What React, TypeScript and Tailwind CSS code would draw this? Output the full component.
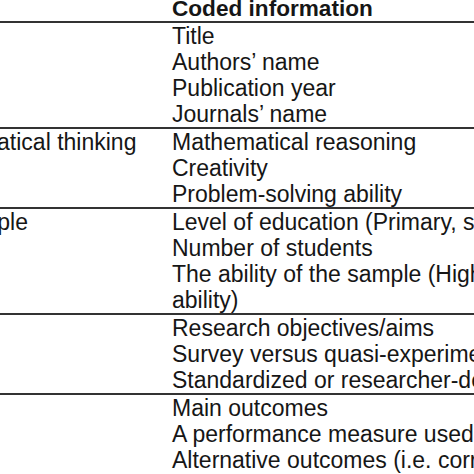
import React from "react";

type Section = { label?: string; offset?: string; lines: string[] };

const sections: Section[] = [
  { lines: ["Title", "Authors’ name", "Publication year", "Journals’ name"] },
  {
    label: "Mathematical thinking",
    offset: "ml-[-86px]",
    lines: ["Mathematical reasoning", "Creativity", "Problem-solving ability"],
  },
  {
    label: "Sample",
    offset: "ml-[-50px]",
    lines: [
      "Level of education (Primary, secondary, tertiary)",
      "Number of students",
      "The ability of the sample (High and low",
      "ability)",
    ],
  },
  {
    lines: [
      "Research objectives/aims",
      "Survey versus quasi-experimental design",
      "Standardized or researcher-designed test",
    ],
  },
  {
    lines: [
      "Main outcomes",
      "A performance measure used",
      "Alternative outcomes (i.e. correlation)",
    ],
  },
];

export default function App() {
  return (
    <div className="w-[474px] h-[474px] overflow-hidden bg-white text-[#161616] font-['Liberation_Sans',Arial,sans-serif] text-[23px] leading-[26px]">
      <div className="grid grid-cols-[172px_1fr] h-[21px]">
        <div />
        <div className="font-bold text-[22.6px] leading-[18px] whitespace-nowrap">Coded information</div>
      </div>
      {sections.map((s, i) => (
        <div key={i}>
          <div className="h-[2px] bg-[#333333]" />
          <div className="grid grid-cols-[172px_1fr]">
            <div className="whitespace-nowrap">
              {s.label ? <div className={s.offset}>{s.label}</div> : null}
            </div>
            <div className="flex flex-col whitespace-nowrap">
              {s.lines.map((l) => (
                <div key={l}>{l}</div>
              ))}
            </div>
          </div>
        </div>
      ))}
    </div>
  );
}
